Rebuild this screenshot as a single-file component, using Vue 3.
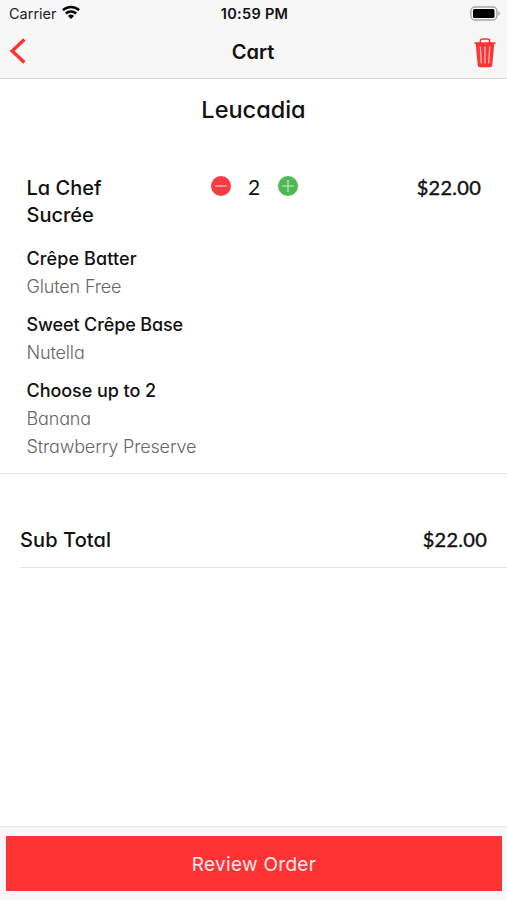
<script setup>
import { ref, computed } from 'vue'

const quantity = ref(2)
const unitPrice = 11
const total = computed(() => '$' + (quantity.value * unitPrice).toFixed(2))
const nameLines = ['La Chef', 'Sucrée']
const groups = [
  { title: 'Crêpe Batter', cls: 'batter', items: ['Gluten Free'] },
  { title: 'Sweet Crêpe Base', cls: 'base', items: ['Nutella'] },
  { title: 'Choose up to 2', cls: 'extras', items: ['Banana', 'Strawberry Preserve'] },
]
</script>

<template>
  <div class="screen">
    <header class="top">
      <div class="status">
        <div class="carrier">
          <span>Carrier</span>
          <svg class="wifi" width="18" height="14" viewBox="0 0 18 14" fill="none" stroke="#000" stroke-width="2.5">
            <path d="M0.9 5.2a11.7 11.7 0 0 1 16.2 0" />
            <path d="M3.8 8.5a7.5 7.5 0 0 1 10.4 0" />
            <path d="M9 13.9 6 10.9a4.3 4.3 0 0 1 6 0Z" fill="#000" stroke="none" />
          </svg>
        </div>
        <div class="clock">10:59 PM</div>
        <svg class="battery" width="31" height="15" viewBox="0 0 31 15">
          <rect x="1.9" y="1" width="26" height="13" rx="4" fill="#fafafa" stroke="#a6a6a6" stroke-width="1.4" />
          <rect x="4" y="3" width="21.5" height="9" rx="1.5" fill="#000" />
          <path d="M29.3 5v5c2-.8 2-4.2 0-5Z" fill="#a6a6a6" />
        </svg>
      </div>
      <nav class="nav">
        <svg class="back" width="18" height="28" viewBox="0 0 18 28" fill="none" stroke="#ff3334" stroke-width="3.4">
          <path d="M15.4 2.5 3.2 14l12.2 11.5" />
        </svg>
        <h1 class="title">Cart</h1>
        <svg class="trash" width="22" height="30" viewBox="0 0 22 30">
          <path d="M6.3 5V3.2Q6.3 1 8.4 1h5.2q2.1 0 2.1 2.2V5" fill="none" stroke="#ff3334" stroke-width="1.5" />
          <path d="M0.5 4.2h21v1.900h-1.300L18.3 27q-.2 2.200-2.300 2.200H6q-2.100 0-2.300-2.200L1.800 6.100H.5Z" fill="#ff3334" />
          <path d="M6.300 8.500 7.300 25.500M11 8.500v17M15.700 8.500l-1 17" fill="none" stroke="#ffc4c4" stroke-width="1.200" />
        </svg>
      </nav>
    </header>

    <main class="content">
      <h2 class="store">Leucadia</h2>
      <section class="item">
        <div class="row">
          <div class="name">
            <div v-for="l in nameLines" :key="l">{{ l }}</div>
          </div>
          <div class="stepper">
            <svg width="20" height="20" viewBox="0 0 20 20" @click="quantity--">
              <circle cx="10" cy="10" r="10" fill="#f73b41" />
              <path d="M4 10h12" stroke="#ffc4c6" stroke-width="1.2" />
            </svg>
            <span class="qty">{{ quantity }}</span>
            <svg width="20" height="20" viewBox="0 0 20 20" @click="quantity++">
              <circle cx="10" cy="10" r="10" fill="#4cb953" />
              <path d="M4 10h12M10 4v12" stroke="#c7edc9" stroke-width="1.2" />
            </svg>
          </div>
          <div class="price">{{ total }}</div>
        </div>
        <div v-for="g in groups" :key="g.title" class="group">
          <div :class="['group-title', g.cls]">{{ g.title }}</div>
          <div v-for="i in g.items" :key="i" class="option">{{ i }}</div>
        </div>
      </section>
      <section class="subtotal">
        <span class="sub-label">Sub Total</span>
        <span class="price">{{ total }}</span>
      </section>
    </main>

    <footer class="bottom">
      <button class="review">Review Order</button>
    </footer>
  </div>
</template>

<style>
body { margin: 0; background: #fff; }
</style>

<style scoped>
.screen {
  width: 507px;
  height: 900px;
  display: flex;
  flex-direction: column;
  overflow: hidden;
  background: #fff;
  color: #111;
  font-family: Inter, 'Liberation Sans', sans-serif;
  font-feature-settings: 'cv11' 1;
  white-space: nowrap;
}
.top {
  height: 79px;
  box-sizing: border-box;
  background: #f7f7f7;
  border-bottom: 1px solid #d6d6d6;
}
.status {
  height: 27px;
  display: grid;
  grid-template-columns: 1fr auto 1fr;
  align-items: center;
  padding: 0 7px 0 9px;
  font-feature-settings: normal;
}
.carrier { display: flex; align-items: center; gap: 6px; font-size: 14.5px; color: #222; }
.wifi { margin: -3px 0 0 -1px; }
.clock { font-weight: 600; font-size: 14.5px; letter-spacing: 0.3px; }
.battery { justify-self: end; margin-top: -1px; }
.nav {
  height: 50px;
  display: grid;
  grid-template-columns: 1fr auto 1fr;
  align-items: center;
  padding: 0 11px 0 10px;
}
.back { margin-top: -2px; margin-left: -1px; }
.trash { justify-self: end; margin-top: 1px; }
.title { margin: 0; font-size: 20px; font-weight: 600; }
.content { flex: 1; }
.store {
  margin: 0;
  height: 95px;
  padding-top: 15px;
  box-sizing: border-box;
  text-align: center;
  font-size: 23.5px;
  line-height: 32px;
  font-weight: 450;
}
.item { height: 300px; box-sizing: border-box; padding: 0 26px 0 26.5px; border-bottom: 1px solid #e6e6e6; }
.row { display: flex; height: 55px; margin-bottom: 16px; }
.name { width: 184px; padding-top: 1px; font-size: 20px; line-height: 27px; font-weight: 500; }
.stepper { display: flex; align-items: center; height: 24px; width: 87px; justify-content: space-between; }
.qty { font: 400 21px/28px Lato, sans-serif; padding-top: 2px; }
.price { margin-left: auto; font: 400 20px/26px Lato, sans-serif; letter-spacing: 0.25px; -webkit-text-stroke: 0.4px #111; }
.group { margin-bottom: 10px; font-size: 18px; line-height: 28px; }
.group-title { font-weight: 550; }
.batter { letter-spacing: 0.12px; }
.base { letter-spacing: -0.12px; }
.extras { letter-spacing: -0.05px; }
.option { font-weight: 300; color: #666; letter-spacing: -0.15px; }
.subtotal {
  margin-left: 20px;
  padding: 39px 20px 0 0;
  height: 94px;
  box-sizing: border-box;
  display: flex;
  align-items: center;
  border-bottom: 1px solid #e4e4e4;
}
.subtotal .price { padding-bottom: 2px; }
.sub-label { font-size: 20px; font-weight: 500; letter-spacing: 0.1px; }
.bottom {
  height: 74px;
  box-sizing: border-box;
  padding: 9px 5px 9px 6px;
  border-top: 1px solid #e8e8e8;
  background: #f8f8f8;
}
.review {
  display: block;
  width: 100%;
  height: 55px;
  border: 0;
  padding: 2px 0 0;
  background: #ff3334;
  color: #ffe8e8;
  font: 400 19px/53px Inter, sans-serif;
  font-feature-settings: 'cv11' 1;
  letter-spacing: 0.3px;
}
</style>
